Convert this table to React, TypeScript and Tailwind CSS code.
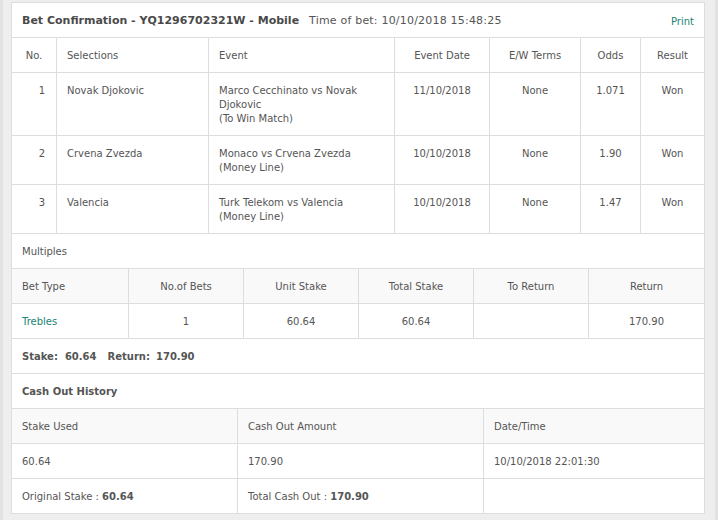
const font = { fontFamily: '"DejaVu Sans", Verdana, sans-serif' };

const selections = [
  { no: 1, sel: "Novak Djokovic", event: "Marco Cecchinato vs Novak Djokovic", market: "(To Win Match)", date: "11/10/2018", ew: "None", odds: "1.071", result: "Won" },
  { no: 2, sel: "Crvena Zvezda", event: "Monaco vs Crvena Zvezda", market: "(Money Line)", date: "10/10/2018", ew: "None", odds: "1.90", result: "Won" },
  { no: 3, sel: "Valencia", event: "Turk Telekom vs Valencia", market: "(Money Line)", date: "10/10/2018", ew: "None", odds: "1.47", result: "Won" },
];

const cell = "bg-white px-[10px] pt-[11px] pb-[9px] leading-[14px]";
const head = "bg-[#f9f9f9] px-[10px] pt-[11px] pb-[9px] leading-[14px]";

export default function App() {
  return (
    <div
      style={font}
      className="w-[718px] h-[520px] bg-[#eeeeee] border-x-[3px] border-[#e2e2e2] pt-[2px] pl-[8px] text-[10px] text-[#555]"
    >
      <div className="w-[694px] flex flex-col gap-px bg-[#dddddd] border border-[#dddddd]">
        {/* title bar */}
        <div className="bg-white h-[34px] px-[10px] pt-[2px] flex items-center justify-between">
          <div className="text-[11px]">
            <span className="font-bold text-[#4a4a4a]">Bet Confirmation - YQ1296702321W - Mobile</span>
            <span className="ml-[10px] tracking-[0.2px]">Time of bet: 10/10/2018 15:48:25</span>
          </div>
          <a className="text-[#1a8373] cursor-pointer">Print</a>
        </div>

        {/* selections */}
        <div className="grid grid-cols-[44px_151px_185px_94px_90px_59px_63px] gap-px">
          <div className={`${cell} text-center`}>No.</div>
          <div className={cell}>Selections</div>
          <div className={cell}>Event</div>
          <div className={`${cell} text-center`}>Event Date</div>
          <div className={`${cell} text-center`}>E/W Terms</div>
          <div className={`${cell} text-center`}>Odds</div>
          <div className={`${cell} text-center`}>Result</div>
          {selections.map((s) => (
            <>
              <div key={`n${s.no}`} className={`${cell} text-right pr-[11px]`}>{s.no}</div>
              <div key={`s${s.no}`} className={cell}>{s.sel}</div>
              <div key={`e${s.no}`} className={cell}>
                {s.event}
                <br />
                {s.market}
              </div>
              <div key={`d${s.no}`} className={`${cell} text-center`}>{s.date}</div>
              <div key={`w${s.no}`} className={`${cell} text-center`}>{s.ew}</div>
              <div key={`o${s.no}`} className={`${cell} text-center`}>{s.odds}</div>
              <div key={`r${s.no}`} className={`${cell} text-center`}>{s.result}</div>
            </>
          ))}
        </div>

        {/* multiples */}
        <div className={cell}>Multiples</div>
        <div className="grid grid-cols-[116px_114px_114px_114px_114px_115px] gap-px">
          <div className={head}>Bet Type</div>
          <div className={`${head} text-center`}>No.of Bets</div>
          <div className={`${head} text-center`}>Unit Stake</div>
          <div className={`${head} text-center`}>Total Stake</div>
          <div className={`${head} text-center`}>To Return</div>
          <div className={`${head} text-center`}>Return</div>
          <div className={`${cell} text-[#1a8373]`}>Trebles</div>
          <div className={`${cell} text-center`}>1</div>
          <div className={`${cell} text-center`}>60.64</div>
          <div className={`${cell} text-center`}>60.64</div>
          <div className={`${cell} text-center`}></div>
          <div className={`${cell} text-center`}>170.90</div>
        </div>
        <div className={`${cell} font-bold`}>
          <span>Stake:</span>
          <span className="ml-[7px]">60.64</span>
          <span className="ml-[11px]">Return:</span>
          <span className="ml-[6px]">170.90</span>
        </div>

        {/* cash out history */}
        <div className={`${cell} font-bold`}>Cash Out History</div>
        <div className="grid grid-cols-[225px_245px_220px] gap-px">
          <div className={head}>Stake Used</div>
          <div className={head}>Cash Out Amount</div>
          <div className={head}>Date/Time</div>
          <div className={cell}>60.64</div>
          <div className={cell}>170.90</div>
          <div className={cell}>10/10/2018 22:01:30</div>
          <div className={cell}>
            Original Stake : <span className="font-bold">60.64</span>
          </div>
          <div className={cell}>
            Total Cash Out : <span className="font-bold">170.90</span>
          </div>
          <div className={cell}></div>
        </div>
      </div>
    </div>
  );
}
